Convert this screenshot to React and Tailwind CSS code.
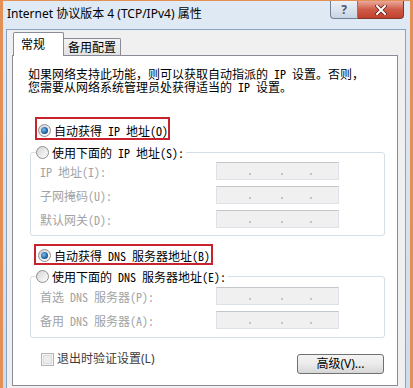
import React from 'react';

const cjk = "font-['Noto_Sans_Mono_CJK_SC','Noto_Sans_CJK_SC',monospace]";
const ui = "font-['Noto_Sans','Noto_Sans_CJK_SC',sans-serif]";

const Radio = ({ checked }) => (
  <span className="w-[13px] h-[13px] shrink-0 rounded-full border border-[#8e8f8f] bg-gradient-to-br from-[#d4d4d4] to-[#ffffff] flex items-center justify-center">
    {checked && (
      <span className="w-[7px] h-[7px] rounded-full bg-[radial-gradient(circle_at_40%_40%,#7bc1f0,#1f5f9c_60%,#0d3a6b)]" />
    )}
  </span>
);

const Legend = ({ children }) => (
  <div className="flex items-center h-[13px] -mt-[7px] ml-[5px] bg-white pr-[2px] self-start">
    <Radio />
    <span className={`ml-[3px] whitespace-nowrap text-[12px] leading-[13px] text-black ${cjk}`}>{children}</span>
  </div>
);

const IpBox = () => (
  <div className="w-[123px] h-[18px] border border-[#dde2e8] border-t-[#c3c6cb] bg-[#f0f0f0] flex items-end pb-[4px] pl-[32px]">
    <span className="w-[2px] h-[2px] bg-[#c4c4c4]" />
    <span className="w-[2px] h-[2px] bg-[#c4c4c4] ml-[30px]" />
    <span className="w-[2px] h-[2px] bg-[#c4c4c4] ml-[27px]" />
  </div>
);

const Row = ({ label, first }) => (
  <div className={`flex items-center ${first ? '' : 'mt-[6px]'}`}>
    <span className={`w-[176px] ml-[9px] whitespace-nowrap text-[12px] leading-[13px] text-[#a3a3a3] ${cjk}`}>{label}</span>
    <IpBox />
  </div>
);

const App = () => {
  return (
    <div className="w-[413px] h-[388px] overflow-hidden flex flex-col border-x-[3px] border-t border-[#e39056] bg-gradient-to-b from-[#e0eaf5] to-[#cddcee]">
      {/* title bar */}
      <div className="h-[28px] flex items-start shrink-0">
        <span className={`ml-[4px] mt-[5px] text-[12px] leading-[16px] text-black ${ui}`}>
          Internet 协议版本 4 (TCP/IPv4) 属性
        </span>
        <div className="ml-auto mr-[6px] flex">
          <div className="w-[28px] h-[18px] border border-t-0 border-[#6f7f96] rounded-bl-[4px] bg-gradient-to-b from-[#eef2f7] to-[#c8d4e3] flex items-center justify-center">
            <span className={`text-[12px] leading-[12px] font-bold text-[#4a5870] ${ui}`}>?</span>
          </div>
          <div className="w-[46px] h-[18px] border border-t-0 border-l-0 border-[#7a3a33] rounded-br-[4px] bg-gradient-to-b from-[#e9a99b] via-[#cf5a48] to-[#c2402c] flex items-center justify-center">
            <svg width="12" height="10" viewBox="0 0 12 10">
              <path d="M2 1 L10 9 M10 1 L2 9" stroke="#5a1a12" strokeWidth="3.4" strokeLinecap="square" />
              <path d="M2 1 L10 9 M10 1 L2 9" stroke="#ffffff" strokeWidth="2" strokeLinecap="square" />
            </svg>
          </div>
        </div>
      </div>

      {/* body */}
      <div className="ml-[3px] mr-[4px] flex-1 flex flex-col bg-[#f0f0f0] border-x border-t border-[#8ba2c0]">
        <div className="pt-[2px] h-[25px] flex items-end pl-[6px] shrink-0">
          <div className={`relative z-10 w-[51px] h-[24px] -mb-[1px] bg-white border border-b-0 border-[#898c95] rounded-t-[2px] pl-[7px] pt-[5px] text-[12px] leading-[14px] text-black ${ui}`}>
            常规
          </div>
          <div className={`w-[57px] h-[17px] bg-gradient-to-b from-[#f3f3f3] to-[#e2e2e2] border border-l-0 border-b-0 border-[#898c95] rounded-tr-[2px] pl-[4px] pt-[2px] text-[12px] leading-[14px] text-black ${ui}`}>
            备用配置
          </div>
        </div>

        <div className="ml-[5px] mr-[7px] mb-[2px] flex-1 bg-white border border-[#898c95] flex flex-col">
          <p className={`mt-[11px] ml-[15px] whitespace-nowrap text-[12px] leading-[13px] text-black ${cjk}`}>
            如果网络支持此功能，则可以获取自动指派的 IP 设置。否则，<br />
            您需要从网络系统管理员处获得适当的 IP 设置。
          </p>

          <div className="mt-[24px] ml-[22px] w-[135px] h-[23px] border-2 border-[#c8232c] pt-[5px] pl-[1px] flex items-start">
            <div className="flex items-center h-[13px]">
              <Radio checked />
              <span className={`ml-[3px] whitespace-nowrap text-[12px] leading-[13px] text-black ${cjk}`}>自动获得 IP 地址(O)</span>
            </div>
          </div>

          <div className="mt-[12px] ml-[17px] w-[355px] border border-[#d5dfe5] rounded-[3px] flex flex-col pb-[7px]">
            <Legend>使用下面的 IP 地址(S):</Legend>
            <div className="mt-[3px]">
              <Row first label="IP 地址(I):" />
              <Row label="子网掩码(U):" />
              <Row label="默认网关(D):" />
            </div>
          </div>

          <div className="mt-[8px] ml-[21px] w-[179px] h-[21px] border-2 border-[#c8232c] pt-[3px] pl-[2px] flex items-start">
            <div className="flex items-center h-[13px]">
              <Radio checked />
              <span className={`ml-[3px] whitespace-nowrap text-[12px] leading-[13px] text-black ${cjk}`}>自动获得 DNS 服务器地址(B)</span>
            </div>
          </div>

          <div className="mt-[11px] ml-[17px] w-[355px] border border-[#d5dfe5] rounded-[3px] flex flex-col pb-[8px]">
            <Legend>使用下面的 DNS 服务器地址(E):</Legend>
            <div className="mt-[4px]">
              <Row first label="首选 DNS 服务器(P):" />
              <Row label="备用 DNS 服务器(A):" />
            </div>
          </div>

          <div className="flex items-start justify-between">
            <div className="mt-[14px] ml-[28px] flex items-center">
              <span className="w-[13px] h-[13px] border border-[#b4b4b4] bg-[#f4f4f4] flex items-center justify-center">
                <span className="w-[9px] h-[9px] border border-[#dcdcdc] bg-[#ececec]" />
              </span>
              <span className={`ml-[3px] text-[12px] leading-[14px] text-[#3c3c3c] ${ui}`}>退出时验证设置(L)</span>
            </div>
            <button className={`mt-[16px] mr-[13px] w-[87px] h-[20px] rounded-[3px] border border-[#707070] bg-gradient-to-b from-[#f4f4f4] via-[#ebebeb] to-[#d6d6d6] text-[12px] leading-[14px] text-black ${ui}`}>
              高级(V)...
            </button>
          </div>
        </div>
      </div>
    </div>
  );
};

export default App;
